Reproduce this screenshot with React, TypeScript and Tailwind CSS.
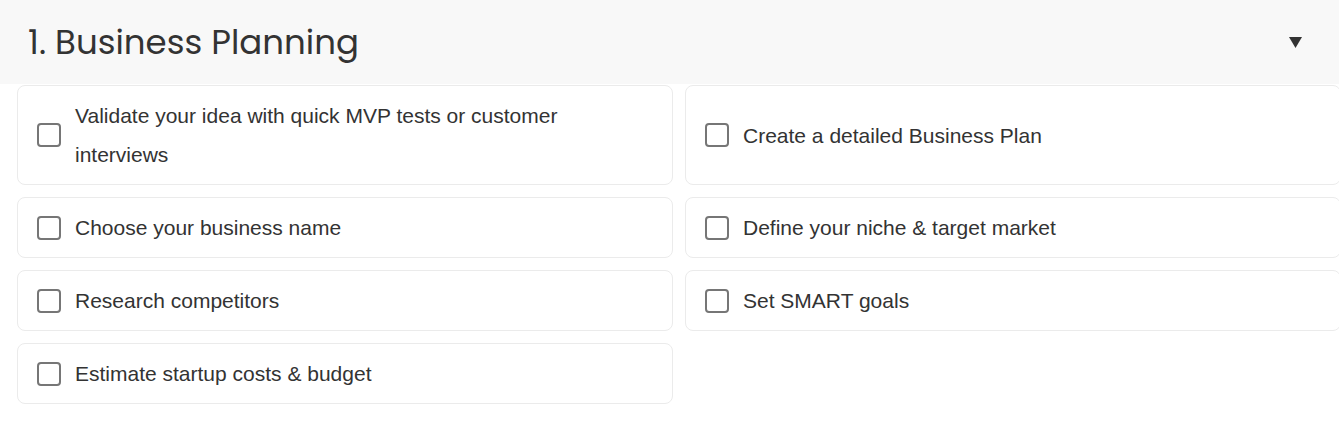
const ITEMS = [
  'Validate your idea with quick MVP tests or customer interviews',
  'Create a detailed Business Plan',
  'Choose your business name',
  'Define your niche & target market',
  'Research competitors',
  'Set SMART goals',
  'Estimate startup costs & budget',
]

function TaskCard({ label }: { label: string }) {
  return (
    <label className="flex items-center gap-[14px] bg-white border border-[#ebebeb] rounded-lg pl-[19px] pr-6 py-[10px] cursor-pointer">
      <span className="w-[24px] h-[24px] flex-shrink-0 border-2 border-[#767676] rounded-[4px] bg-white" />
      <span className="text-[21px] leading-[39px] text-[#333]">{label}</span>
    </label>
  )
}

export default function App() {
  return (
    <div className="w-full overflow-hidden bg-white min-h-[430px] font-['Liberation_Sans',Arial,sans-serif]">
      {/* Section header */}
      <div className="flex items-center justify-between h-[84px] bg-[#f8f8f8] pl-[28px] pr-[37px]">
        <h2 className="text-[34px] text-[#333] font-['Poppins','Inter',sans-serif]">
          1. Business Planning
        </h2>
        <svg className="w-[13px] h-[11px]" viewBox="0 0 13 11">
          <polygon points="0,0 13,0 6.5,11" fill="#333" />
        </svg>
      </div>

      {/* Checklist */}
      <div className="grid grid-cols-2 gap-3 w-[1324px] ml-[17px] mt-px">
        {ITEMS.map((item) => (
          <TaskCard key={item} label={item} />
        ))}
      </div>
    </div>
  )
}
